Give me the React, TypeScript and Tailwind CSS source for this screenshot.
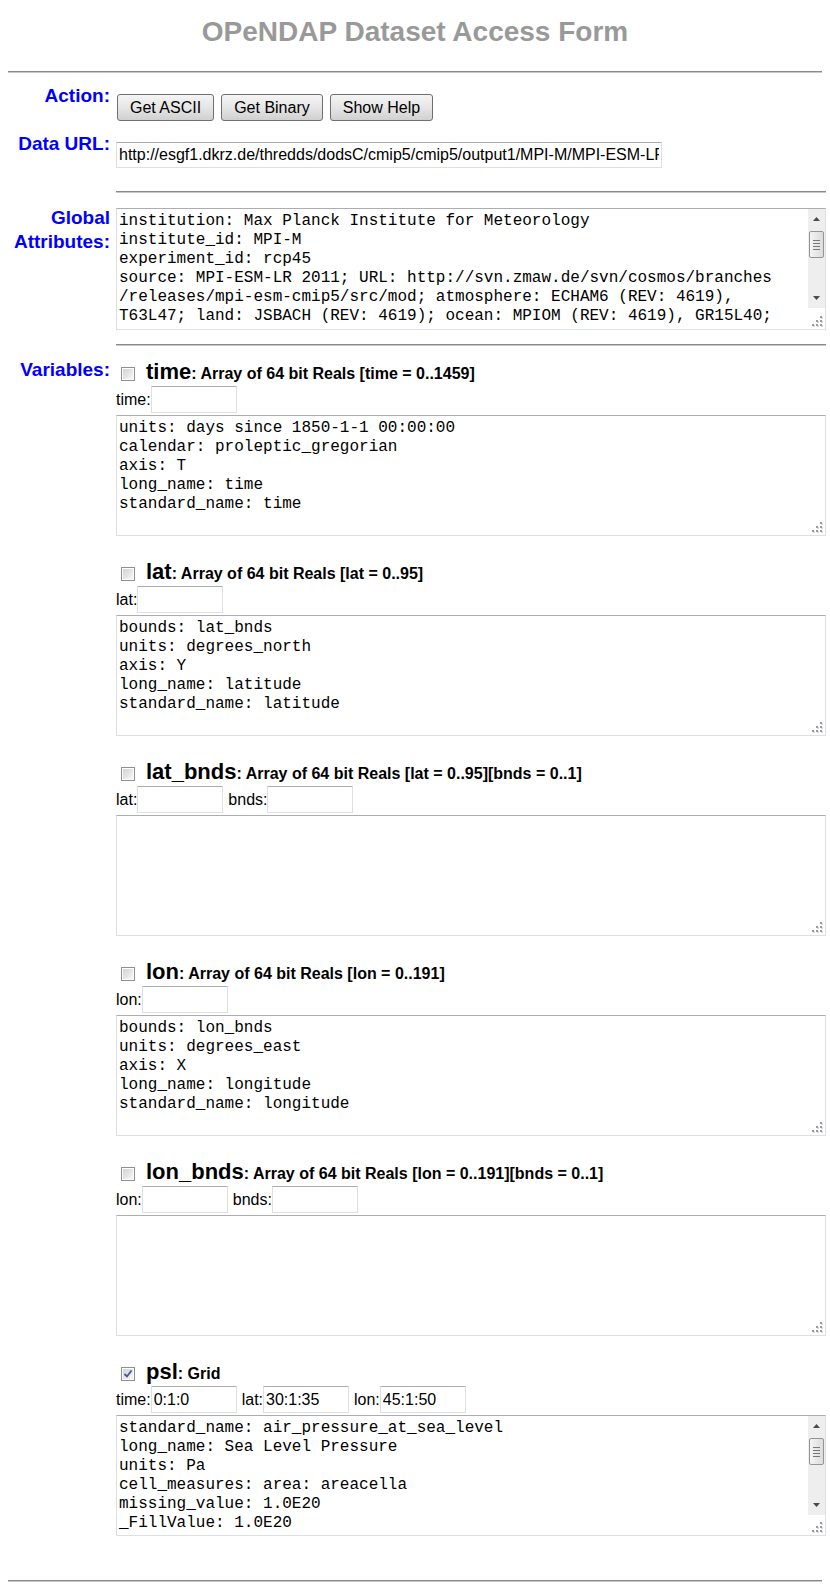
import React from "react";

type Variable = {
  name: string;
  desc: string;
  fields: [string, string][];
  lines: string[];
  checked?: boolean;
  scroll?: boolean;
};

const url =
  "http://esgf1.dkrz.de/thredds/dodsC/cmip5/cmip5/output1/MPI-M/MPI-ESM-LR/rcp45/mon/atmos/Amon/r1i1p1/v20111014/psl/psl_Amon_MPI-ESM-LR_rcp45_r1i1p1_200601-210012.nc";

const globalAttrs = [
  "institution: Max Planck Institute for Meteorology",
  "institute_id: MPI-M",
  "experiment_id: rcp45",
  "source: MPI-ESM-LR 2011; URL: http://svn.zmaw.de/svn/cosmos/branches",
  "/releases/mpi-esm-cmip5/src/mod; atmosphere: ECHAM6 (REV: 4619),",
  "T63L47; land: JSBACH (REV: 4619); ocean: MPIOM (REV: 4619), GR15L40;",
];

const variables: Variable[] = [
  {
    name: "time",
    desc: ": Array of 64 bit Reals [time = 0..1459]",
    fields: [["time:", ""]],
    lines: [
      "units: days since 1850-1-1 00:00:00",
      "calendar: proleptic_gregorian",
      "axis: T",
      "long_name: time",
      "standard_name: time",
    ],
  },
  {
    name: "lat",
    desc: ": Array of 64 bit Reals [lat = 0..95]",
    fields: [["lat:", ""]],
    lines: ["bounds: lat_bnds", "units: degrees_north", "axis: Y", "long_name: latitude", "standard_name: latitude"],
  },
  {
    name: "lat_bnds",
    desc: ": Array of 64 bit Reals [lat = 0..95][bnds = 0..1]",
    fields: [
      ["lat:", ""],
      ["bnds:", ""],
    ],
    lines: [],
  },
  {
    name: "lon",
    desc: ": Array of 64 bit Reals [lon = 0..191]",
    fields: [["lon:", ""]],
    lines: ["bounds: lon_bnds", "units: degrees_east", "axis: X", "long_name: longitude", "standard_name: longitude"],
  },
  {
    name: "lon_bnds",
    desc: ": Array of 64 bit Reals [lon = 0..191][bnds = 0..1]",
    fields: [
      ["lon:", ""],
      ["bnds:", ""],
    ],
    lines: [],
  },
  {
    name: "psl",
    desc: ": Grid",
    checked: true,
    scroll: true,
    fields: [
      ["time:", "0:1:0"],
      ["lat:", "30:1:35"],
      ["lon:", "45:1:50"],
    ],
    lines: [
      "standard_name: air_pressure_at_sea_level",
      "long_name: Sea Level Pressure",
      "units: Pa",
      "cell_measures: area: areacella",
      "missing_value: 1.0E20",
      "_FillValue: 1.0E20",
    ],
  },
];

function Label({ children }: { children: React.ReactNode }) {
  return (
    <div className="w-[102px] shrink-0 text-right text-[19px] font-bold leading-[24px] text-[#0000ff]">{children}</div>
  );
}

function Rule({ full }: { full?: boolean }) {
  return <div className={full ? "h-[2px] w-[814px] border-t border-b border-t-[#8a8a8a] border-b-[#c8c8c8]" : "h-[2px] w-[710px] border-t border-b border-t-[#8a8a8a] border-b-[#c8c8c8]"} />;
}

function Scrollbar() {
  return (
    <div className="absolute right-0 top-0 flex h-[99px] w-[17px] flex-col items-center bg-[#eeeeee]">
      <svg className="mt-[8px]" width="7" height="4" viewBox="0 0 7 4">
        <path d="M3.5 0 L7 4 L0 4 Z" fill="#4a4a4a" />
      </svg>
      <div className="mt-[10px] flex h-[27px] w-[15px] flex-col items-center justify-center gap-[2px] rounded-[2px] border border-[#959595] bg-linear-to-r from-[#f4f4f4] to-[#dcdcdc]">
        <span className="h-px w-[7px] bg-[#777]" />
        <span className="h-px w-[7px] bg-[#777]" />
        <span className="h-px w-[7px] bg-[#777]" />
        <span className="h-px w-[7px] bg-[#777]" />
      </div>
      <div className="flex-1" />
      <svg className="mb-[8px]" width="7" height="4" viewBox="0 0 7 4">
        <path d="M0 0 L7 0 L3.5 4 Z" fill="#4a4a4a" />
      </svg>
    </div>
  );
}

function Grip() {
  const dots = [
    [8, 0],
    [4, 4],
    [8, 4],
    [0, 8],
    [4, 8],
    [8, 8],
  ];
  return (
    <svg className="absolute bottom-[2px] right-[2px]" width="11" height="11" viewBox="0 0 11 11">
      {dots.map(([x, y]) => (
        <g key={`${x}-${y}`}>
          <rect x={x + 1} y={y + 1} width="2" height="2" fill="#d8d8d8" />
          <rect x={x} y={y} width="2" height="2" fill="#9a9a9a" />
        </g>
      ))}
    </svg>
  );
}

function TextBox({ lines, scroll, tall }: { lines: string[]; scroll?: boolean; tall?: boolean }) {
  return (
    <div
      className={
        tall
          ? "relative h-[122px] w-[710px] overflow-hidden border border-[#dcdfe6] border-t-[#abadb3] bg-white"
          : "relative h-[121px] w-[710px] overflow-hidden border border-[#dcdfe6] border-t-[#abadb3] bg-white"
      }
    >
      <div className="whitespace-pre px-[2px] pt-[3px] font-['Liberation_Mono','Courier_New',monospace] text-[16px] leading-[19px] text-black">
        {lines.join("\n")}
      </div>
      {scroll && <Scrollbar />}
      <Grip />
    </div>
  );
}

function Check({ on }: { on?: boolean }) {
  return (
    <span className="ml-[5px] mr-[11px] mt-[7px] flex h-[14px] w-[14px] shrink-0 border border-[#8e8f8f] bg-white p-[1px]">
      <span className="flex h-full w-full items-center justify-center bg-linear-to-br from-[#d2d2d2] to-[#f7f7f7]">
        {on && (
          <svg width="10" height="10" viewBox="0 0 10 10">
            <path d="M1.5 5 L4 7.5 L8.5 1.5" fill="none" stroke="#3f5a9a" strokeWidth="1.8" />
          </svg>
        )}
      </span>
    </span>
  );
}

function VarBlock({ v }: { v: Variable }) {
  return (
    <div className="mb-[24px]">
      <div className="flex h-[26px] items-start">
        <Check on={v.checked} />
        <span className="text-[22px] font-bold leading-[24px] text-black">
          {v.name}
          <span className="text-[16px]">{v.desc}</span>
        </span>
      </div>
      <div className="flex h-[27px] items-center text-[16px] text-black">
        {v.fields.map(([label, value]) => (
          <React.Fragment key={label}>
            <span>{label}</span>
            <input
              readOnly
              value={value}
              className="mr-[5px] h-[27px] w-[86px] border border-[#dcdfe6] border-t-[#abadb3] bg-white px-[2px] text-[16px] text-black outline-none"
            />
          </React.Fragment>
        ))}
      </div>
      <div className="mt-[2px]">
        <TextBox lines={v.lines} scroll={v.scroll} />
      </div>
    </div>
  );
}

function Button({ children }: { children: React.ReactNode }) {
  return (
    <button
      type="button"
      className="h-[27px] rounded-[3px] border border-[#707070] bg-linear-to-b from-[#f4f4f4] via-[#e6e6e6] to-[#d0d0d0] px-[12px] text-[16px] leading-none text-black"
    >
      {children}
    </button>
  );
}

export default function App() {
  return (
    <div className="min-h-[1589px] w-[830px] bg-white px-[8px] font-['Liberation_Sans',Arial,sans-serif] text-black">
      <h1 className="mt-[16px] text-center text-[28px] font-bold leading-[32px] text-[#999999]">
        OPeNDAP Dataset Access Form
      </h1>
      <div className="mt-[23px]">
        <Rule full />
      </div>

      {/* action */}
      <div className="mt-[11px] flex">
        <Label>Action:</Label>
        <div className="ml-[7px] flex gap-[7px] pb-[11px] pt-[10px]">
          <Button>Get ASCII</Button>
          <Button>Get Binary</Button>
          <Button>Show Help</Button>
        </div>
      </div>

      {/* data url */}
      <div className="flex">
        <Label>Data URL:</Label>
        <div className="ml-[6px] pb-[23px] pt-[10px]">
          <input
            readOnly
            value={url}
            className="h-[26px] w-[546px] border border-[#dcdfe6] border-t-[#abadb3] bg-white px-[2px] text-[16px] text-black outline-none"
          />
        </div>
      </div>

      <div className="ml-[108px]">
        <Rule />
      </div>

      {/* global attributes */}
      <div className="mt-[13px] flex">
        <Label>
          Global
          <br />
          Attributes:
        </Label>
        <div className="ml-[6px] pt-[2px]">
          <TextBox lines={globalAttrs} scroll tall />
        </div>
      </div>

      <div className="ml-[108px] mt-[14px]">
        <Rule />
      </div>

      {/* variables */}
      <div className="mt-[12px] flex">
        <Label>Variables:</Label>
        <div className="ml-[6px] pt-[2px]">
          {variables.map((v) => (
            <VarBlock key={v.name} v={v} />
          ))}
        </div>
      </div>

      <div className="mt-[20px]">
        <Rule full />
      </div>
    </div>
  );
}
